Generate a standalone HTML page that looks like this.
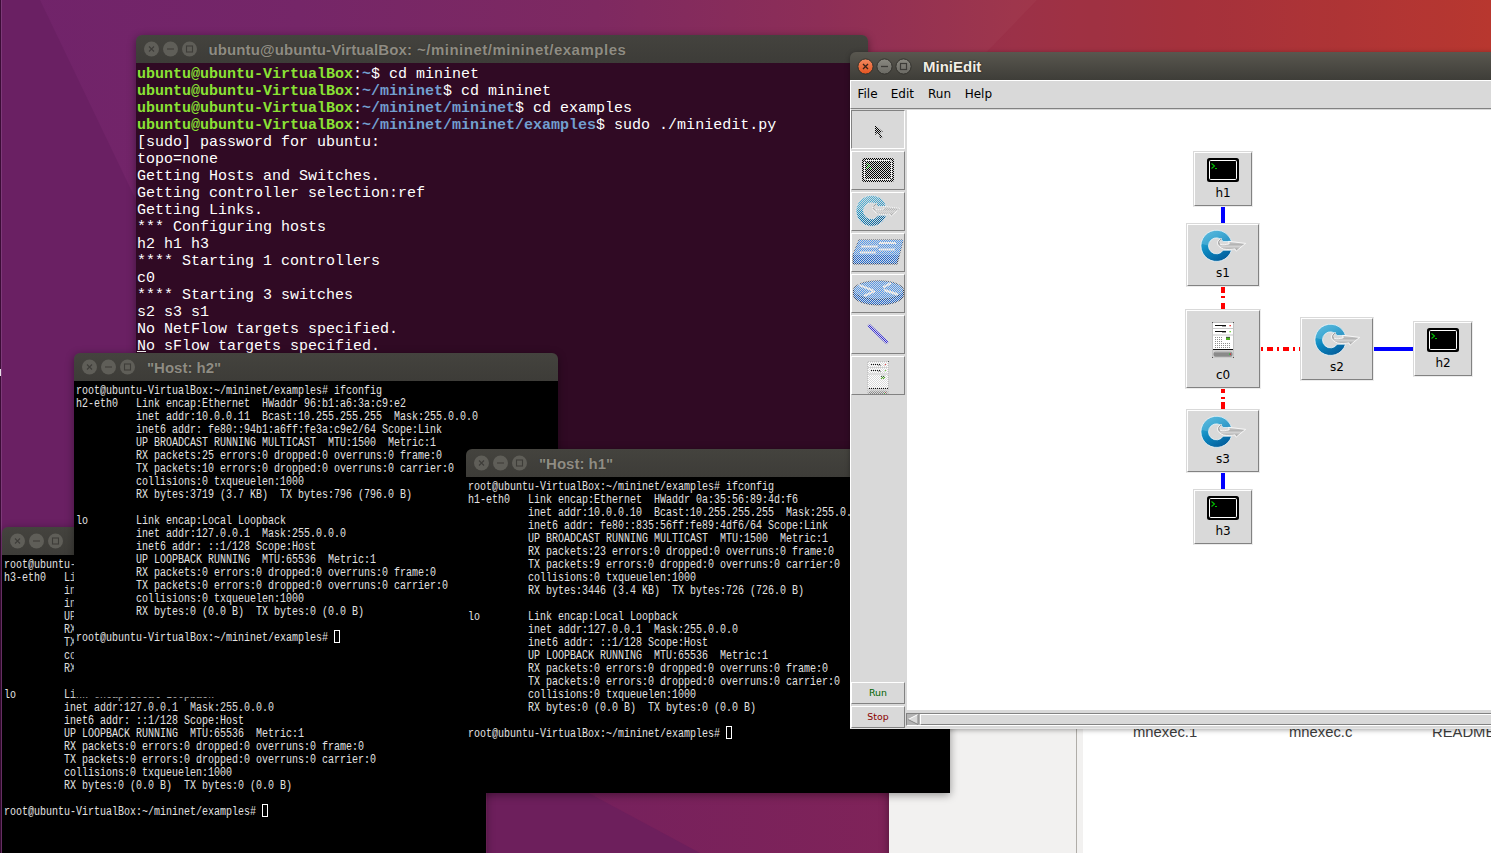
<!DOCTYPE html>
<html lang="en"><head><meta charset="utf-8"><title>MiniEdit desktop</title>
<style>
*{box-sizing:border-box}
html,body{margin:0;padding:0}
body{width:1491px;height:853px;overflow:hidden;position:relative;background:#6d2266;font-family:"Liberation Sans",sans-serif}
.a{position:absolute}
#bg{left:0;top:0;width:1491px;height:853px}
.tb{position:absolute;border-radius:6px 6px 0 0;background:linear-gradient(#44433e,#3d3c38);}
.tb.act{background:linear-gradient(#59574f,#3e3d38)}
.tb svg{position:absolute;left:0;top:0}
.tt{position:absolute;top:1px;height:27px;line-height:27px;font:bold 15px/27px "Liberation Sans",sans-serif;color:#8f8c83;white-space:pre;text-shadow:0 0 1px #2b2a27}
.act .tt{color:#f2eee5;text-shadow:0 0 1.5px #22211e,0 0 1px #22211e}
.sh{box-shadow:0 2px 9px rgba(0,0,0,.4)}
/* main terminal */
#term{left:136px;top:63px;width:732px;height:400px;background:#300a24;overflow:hidden}
#term .r{position:absolute;left:1px;height:17px;line-height:17px;font:15px/17px "Liberation Mono",monospace;color:#fff;white-space:pre}
#term b{font-weight:bold}
.g{color:#8ae234}.bl{color:#729fcf}
/* xterm */
.xt{position:absolute;background:#000;overflow:hidden}
.xt .r{position:absolute;left:2px;height:13px;font:12.5px/13px "Liberation Mono",monospace;color:#e2e2e2;white-space:pre;transform:scaleX(.79987);transform-origin:0 0}
.cur{position:absolute;width:6px;height:13px;border:1px solid #fff}
/* miniedit */
#me{left:850px;top:80px;width:641px;height:649px;background:#d9d9d9}
.dj{font-family:"DejaVu Sans","Liberation Sans",sans-serif}
.mi{position:absolute;top:1px;height:28px;line-height:27px;font:12px/27px "DejaVu Sans",sans-serif;color:#000}
.tbn{position:absolute;left:1px;width:54px;height:39px;background:#d9d9d9;border:1px solid;border-color:#fff #828282 #828282 #fff;overflow:hidden}
.st{position:absolute;background:repeating-conic-gradient(#d9d9d9 0% 25%,transparent 0% 50%) 0 0/2px 2px}
.nd{position:absolute;background:#d9d9d9;border:1px solid;border-color:#d9d9d9 #ececec #ececec #d9d9d9}
.ni{position:absolute;left:0;top:0;right:0;bottom:0;border:1px solid;border-color:#fff #828282 #828282 #fff}
.nl{position:absolute;left:0;right:0;text-align:center;font:12px/14px "DejaVu Sans",sans-serif;color:#000}
.rb{position:absolute;left:1px;width:54px;height:22px;border:1px solid;border-color:#fff #828282 #828282 #fff;font:9.4px/20px "DejaVu Sans",sans-serif;text-align:center}
</style></head>
<body>
<svg id="bg" class="a" width="1491" height="853" viewBox="0 0 1491 853">
<defs>
<linearGradient id="bgm" x1="0" y1="0" x2="1491" y2="0" gradientUnits="userSpaceOnUse">
<stop offset="0" stop-color="#70236a"/><stop offset=".2" stop-color="#752668"/><stop offset=".4" stop-color="#7e2961"/><stop offset=".55" stop-color="#8d2e57"/><stop offset=".68" stop-color="#9e364c"/><stop offset=".8" stop-color="#a9373e"/><stop offset="1" stop-color="#bf3d30"/>
</linearGradient>
</defs>
<rect width="1491" height="853" fill="url(#bgm)"/>
<polygon points="0,0 40,0 136,200 136,853 0,853" fill="#6a2063"/>
<polygon points="1037,0 1491,0 1491,60 979,60" fill="#8a1030" opacity=".13"/>
<linearGradient id="bg2" x1="487" y1="0" x2="889" y2="0" gradientUnits="userSpaceOnUse"><stop offset="0" stop-color="#73205e"/><stop offset="1" stop-color="#7f2359"/></linearGradient>
<rect x="487" y="790" width="402" height="63" fill="url(#bg2)"/>
<polygon points="487,790 583,790 700,853 487,853" fill="#6d1f5c"/>
<rect x="0" y="0" width="1" height="853" fill="#3b0c36"/>
<rect x="1" y="0" width="1" height="853" fill="#7c3a78"/>
<rect x="0" y="369" width="1" height="7" fill="#e8e0e8"/>
</svg>
<div class="a sh" style="left:889px;top:600px;width:620px;height:260px;background:#f2f1f0"></div>
<div class="a" style="left:1076px;top:600px;width:1px;height:260px;background:#b0ada8"></div>
<div class="a" style="left:1083px;top:600px;width:420px;height:260px;background:#fff"></div>
<div class="a" style="left:1133px;top:723px;font:14.8px/18px 'Liberation Sans',sans-serif;color:#3c3c3c;white-space:pre">mnexec.1</div>
<div class="a" style="left:1289px;top:723px;font:14.8px/18px 'Liberation Sans',sans-serif;color:#3c3c3c;white-space:pre">mnexec.c</div>
<div class="a" style="left:1432px;top:723px;font:14.8px/18px 'Liberation Sans',sans-serif;color:#3c3c3c;white-space:pre">README.md</div>
<div class="a sh" style="left:136px;top:35px;width:732px;height:430px;border-radius:6px 6px 0 0"></div>
<div class="tb" style="left:136px;top:35px;width:732px;height:28px"><svg width="70" height="28" viewBox="0 0 70 28"><g fill="#5f5e58"><circle cx="15.5" cy="14.0" r="7.5"/><circle cx="34.5" cy="14.0" r="7.5"/><circle cx="53.5" cy="14.0" r="7.5"/></g>
<path d="M13,11.5 l5,5 m0,-5 l-5,5" stroke="#3e3d39" stroke-width="1.1" fill="none"/><path d="M31,14.0 h7" stroke="#3e3d39" stroke-width="1.1"/><rect x="50.5" y="11.0" width="6" height="6" fill="none" stroke="#3e3d39" stroke-width="1.1"/></svg><span class="tt" style="left:72.5px;line-height:28px;letter-spacing:0.10px">ubuntu@ubuntu-VirtualBox:</span><span class="tt" style="left:281px;line-height:28px;letter-spacing:.5px">~/mininet/mininet/examples</span></div>
<div id="term" class="a">
<div class="r" style="top:3px"><b class="g">ubuntu@ubuntu-VirtualBox</b>:<b class="bl">~</b>$ cd mininet</div>
<div class="r" style="top:20px"><b class="g">ubuntu@ubuntu-VirtualBox</b>:<b class="bl">~/mininet</b>$ cd mininet</div>
<div class="r" style="top:37px"><b class="g">ubuntu@ubuntu-VirtualBox</b>:<b class="bl">~/mininet/mininet</b>$ cd examples</div>
<div class="r" style="top:54px"><b class="g">ubuntu@ubuntu-VirtualBox</b>:<b class="bl">~/mininet/mininet/examples</b>$ sudo ./miniedit.py</div>
<div class="r" style="top:71px">[sudo] password for ubuntu: </div>
<div class="r" style="top:88px">topo=none</div>
<div class="r" style="top:105px">Getting Hosts and Switches.</div>
<div class="r" style="top:122px">Getting controller selection:ref</div>
<div class="r" style="top:139px">Getting Links.</div>
<div class="r" style="top:156px">*** Configuring hosts</div>
<div class="r" style="top:173px">h2 h1 h3 </div>
<div class="r" style="top:190px">**** Starting 1 controllers</div>
<div class="r" style="top:207px">c0 </div>
<div class="r" style="top:224px">**** Starting 3 switches</div>
<div class="r" style="top:241px">s2 s3 s1 </div>
<div class="r" style="top:258px">No NetFlow targets specified.</div>
<div class="r" style="top:275px"><u>N</u>o sFlow targets specified.</div>
</div>
<div class="a sh" style="left:2px;top:527px;width:484px;height:344px;border-radius:6px 6px 0 0"></div>
<div class="tb" style="left:2px;top:527px;width:484px;height:28px"><svg width="70" height="28" viewBox="0 0 70 28"><g fill="#5f5e58"><circle cx="15.5" cy="14.0" r="7.5"/><circle cx="34.5" cy="14.0" r="7.5"/><circle cx="53.5" cy="14.0" r="7.5"/></g>
<path d="M13,11.5 l5,5 m0,-5 l-5,5" stroke="#3e3d39" stroke-width="1.1" fill="none"/><path d="M31,14.0 h7" stroke="#3e3d39" stroke-width="1.1"/><rect x="50.5" y="11.0" width="6" height="6" fill="none" stroke="#3e3d39" stroke-width="1.1"/></svg><span class="tt" style="left:73.0px;line-height:28px;letter-spacing:0.00px">"Host: h3"</span></div>
<div class="xt" style="left:2px;top:555px;width:484px;height:316px">
<div class="r" style="top:4px">root@ubuntu-VirtualBox:~/mininet/examples# ifconfig</div>
<div class="r" style="top:17px">h3-eth0   Link encap:Ethernet  HWaddr 3e:9c:52:4d:1a:7b  </div>
<div class="r" style="top:30px">          inet addr:10.0.0.12  Bcast:10.255.255.255  Mask:255.0.0.0</div>
<div class="r" style="top:43px">          inet6 addr: fe80::3c9c:52ff:fe4d:1a7b/64 Scope:Link</div>
<div class="r" style="top:56px">          UP BROADCAST RUNNING MULTICAST  MTU:1500  Metric:1</div>
<div class="r" style="top:69px">          RX packets:21 errors:0 dropped:0 overruns:0 frame:0</div>
<div class="r" style="top:82px">          TX packets:9 errors:0 dropped:0 overruns:0 carrier:0</div>
<div class="r" style="top:95px">          collisions:0 txqueuelen:1000 </div>
<div class="r" style="top:108px">          RX bytes:3290 (3.2 KB)  TX bytes:726 (726.0 B)</div>
<div class="r" style="top:134px">lo        Link encap:Local Loopback  </div>
<div class="r" style="top:147px">          inet addr:127.0.0.1  Mask:255.0.0.0</div>
<div class="r" style="top:160px">          inet6 addr: ::1/128 Scope:Host</div>
<div class="r" style="top:173px">          UP LOOPBACK RUNNING  MTU:65536  Metric:1</div>
<div class="r" style="top:186px">          RX packets:0 errors:0 dropped:0 overruns:0 frame:0</div>
<div class="r" style="top:199px">          TX packets:0 errors:0 dropped:0 overruns:0 carrier:0</div>
<div class="r" style="top:212px">          collisions:0 txqueuelen:1000 </div>
<div class="r" style="top:225px">          RX bytes:0 (0.0 B)  TX bytes:0 (0.0 B)</div>
<div class="r" style="top:251px">root@ubuntu-VirtualBox:~/mininet/examples# </div>
<i class="cur" style="left:260px;top:249px"></i>
</div>
<div class="a sh" style="left:74px;top:353px;width:484px;height:344px;border-radius:6px 6px 0 0"></div>
<div class="tb" style="left:74px;top:353px;width:484px;height:28px"><svg width="70" height="28" viewBox="0 0 70 28"><g fill="#5f5e58"><circle cx="15.5" cy="14.0" r="7.5"/><circle cx="34.5" cy="14.0" r="7.5"/><circle cx="53.5" cy="14.0" r="7.5"/></g>
<path d="M13,11.5 l5,5 m0,-5 l-5,5" stroke="#3e3d39" stroke-width="1.1" fill="none"/><path d="M31,14.0 h7" stroke="#3e3d39" stroke-width="1.1"/><rect x="50.5" y="11.0" width="6" height="6" fill="none" stroke="#3e3d39" stroke-width="1.1"/></svg><span class="tt" style="left:73.0px;line-height:28px;letter-spacing:0.00px">"Host: h2"</span></div>
<div class="xt" style="left:74px;top:381px;width:484px;height:316px">
<div class="r" style="top:4px">root@ubuntu-VirtualBox:~/mininet/examples# ifconfig</div>
<div class="r" style="top:17px">h2-eth0   Link encap:Ethernet  HWaddr 96:b1:a6:3a:c9:e2  </div>
<div class="r" style="top:30px">          inet addr:10.0.0.11  Bcast:10.255.255.255  Mask:255.0.0.0</div>
<div class="r" style="top:43px">          inet6 addr: fe80::94b1:a6ff:fe3a:c9e2/64 Scope:Link</div>
<div class="r" style="top:56px">          UP BROADCAST RUNNING MULTICAST  MTU:1500  Metric:1</div>
<div class="r" style="top:69px">          RX packets:25 errors:0 dropped:0 overruns:0 frame:0</div>
<div class="r" style="top:82px">          TX packets:10 errors:0 dropped:0 overruns:0 carrier:0</div>
<div class="r" style="top:95px">          collisions:0 txqueuelen:1000 </div>
<div class="r" style="top:108px">          RX bytes:3719 (3.7 KB)  TX bytes:796 (796.0 B)</div>
<div class="r" style="top:134px">lo        Link encap:Local Loopback  </div>
<div class="r" style="top:147px">          inet addr:127.0.0.1  Mask:255.0.0.0</div>
<div class="r" style="top:160px">          inet6 addr: ::1/128 Scope:Host</div>
<div class="r" style="top:173px">          UP LOOPBACK RUNNING  MTU:65536  Metric:1</div>
<div class="r" style="top:186px">          RX packets:0 errors:0 dropped:0 overruns:0 frame:0</div>
<div class="r" style="top:199px">          TX packets:0 errors:0 dropped:0 overruns:0 carrier:0</div>
<div class="r" style="top:212px">          collisions:0 txqueuelen:1000 </div>
<div class="r" style="top:225px">          RX bytes:0 (0.0 B)  TX bytes:0 (0.0 B)</div>
<div class="r" style="top:251px">root@ubuntu-VirtualBox:~/mininet/examples# </div>
<i class="cur" style="left:260px;top:249px"></i>
</div>
<div class="a sh" style="left:466px;top:449px;width:484px;height:344px;border-radius:6px 6px 0 0"></div>
<div class="tb" style="left:466px;top:449px;width:484px;height:28px"><svg width="70" height="28" viewBox="0 0 70 28"><g fill="#5f5e58"><circle cx="15.5" cy="14.0" r="7.5"/><circle cx="34.5" cy="14.0" r="7.5"/><circle cx="53.5" cy="14.0" r="7.5"/></g>
<path d="M13,11.5 l5,5 m0,-5 l-5,5" stroke="#3e3d39" stroke-width="1.1" fill="none"/><path d="M31,14.0 h7" stroke="#3e3d39" stroke-width="1.1"/><rect x="50.5" y="11.0" width="6" height="6" fill="none" stroke="#3e3d39" stroke-width="1.1"/></svg><span class="tt" style="left:73.0px;line-height:28px;letter-spacing:0.00px">"Host: h1"</span></div>
<div class="xt" style="left:466px;top:477px;width:484px;height:316px">
<div class="r" style="top:4px">root@ubuntu-VirtualBox:~/mininet/examples# ifconfig</div>
<div class="r" style="top:17px">h1-eth0   Link encap:Ethernet  HWaddr 0a:35:56:89:4d:f6  </div>
<div class="r" style="top:30px">          inet addr:10.0.0.10  Bcast:10.255.255.255  Mask:255.0.0.0</div>
<div class="r" style="top:43px">          inet6 addr: fe80::835:56ff:fe89:4df6/64 Scope:Link</div>
<div class="r" style="top:56px">          UP BROADCAST RUNNING MULTICAST  MTU:1500  Metric:1</div>
<div class="r" style="top:69px">          RX packets:23 errors:0 dropped:0 overruns:0 frame:0</div>
<div class="r" style="top:82px">          TX packets:9 errors:0 dropped:0 overruns:0 carrier:0</div>
<div class="r" style="top:95px">          collisions:0 txqueuelen:1000 </div>
<div class="r" style="top:108px">          RX bytes:3446 (3.4 KB)  TX bytes:726 (726.0 B)</div>
<div class="r" style="top:134px">lo        Link encap:Local Loopback  </div>
<div class="r" style="top:147px">          inet addr:127.0.0.1  Mask:255.0.0.0</div>
<div class="r" style="top:160px">          inet6 addr: ::1/128 Scope:Host</div>
<div class="r" style="top:173px">          UP LOOPBACK RUNNING  MTU:65536  Metric:1</div>
<div class="r" style="top:186px">          RX packets:0 errors:0 dropped:0 overruns:0 frame:0</div>
<div class="r" style="top:199px">          TX packets:0 errors:0 dropped:0 overruns:0 carrier:0</div>
<div class="r" style="top:212px">          collisions:0 txqueuelen:1000 </div>
<div class="r" style="top:225px">          RX bytes:0 (0.0 B)  TX bytes:0 (0.0 B)</div>
<div class="r" style="top:251px">root@ubuntu-VirtualBox:~/mininet/examples# </div>
<i class="cur" style="left:260px;top:249px"></i>
</div>
<div class="a" style="left:850px;top:52px;width:660px;height:677px;border-radius:6px 6px 0 0;box-shadow:0 1px 5px rgba(0,0,0,.35)"></div>
<div class="tb act" style="left:850px;top:52px;width:660px;height:28px"><svg width="70" height="28" viewBox="0 0 70 28"><defs><linearGradient id="cg" x1="0" y1="0" x2="0" y2="1"><stop offset="0" stop-color="#f48a60"/><stop offset="1" stop-color="#e55420"/></linearGradient><linearGradient id="gg" x1="0" y1="0" x2="0" y2="1"><stop offset="0" stop-color="#8a8981"/><stop offset="1" stop-color="#6a6963"/></linearGradient></defs>
<circle cx="15.5" cy="14.5" r="7.6" fill="url(#cg)" stroke="#33322d" stroke-width="1"/><circle cx="34.5" cy="14.5" r="7.6" fill="url(#gg)" stroke="#33322d" stroke-width="1"/><circle cx="53.5" cy="14.5" r="7.6" fill="url(#gg)" stroke="#33322d" stroke-width="1"/>
<path d="M13,12.0 l5,5 m0,-5 l-5,5" stroke="#3a2218" stroke-width="1.3" fill="none"/><path d="M31,14.5 h7" stroke="#3c3b37" stroke-width="1.3"/><rect x="50.5" y="11.5" width="6" height="6" fill="none" stroke="#3c3b37" stroke-width="1.2"/></svg><span class="tt" style="left:73.0px;line-height:28px;letter-spacing:0.00px">MiniEdit</span></div>
<div id="me" class="a">
<div class="a" style="left:0;top:0;width:641px;height:29px;border-top:1px solid #fff;border-left:1px solid #fff;border-bottom:1px solid #828282;background:#d9d9d9"></div>
<div class="a" style="left:0;top:29px;width:1px;height:620px;background:#fff"></div><div class="a" style="left:0;top:648px;width:641px;height:1px;background:#e4e4e4"></div>
<span class="mi" style="left:7.5px">File</span><span class="mi" style="left:40.7px">Edit</span><span class="mi" style="left:78.0px">Run</span><span class="mi" style="left:114.7px">Help</span>
<div class="a" style="left:57px;top:30px;width:600px;height:600px;background:#fff"></div>
<div class="a" style="left:56px;top:633px;width:600px;height:13px;background:#b3b3b3;border-top:1px solid #828282;border-left:1px solid #828282;border-bottom:1px solid #fff"></div>
<svg class="a" style="left:57px;top:634px" width="12" height="11" viewBox="0 0 12 11"><polygon points="1,5.5 11,0.5 11,10.5" fill="#d9d9d9"/><path d="M1,5.5 L11,0.5" stroke="#fff" stroke-width="1" fill="none"/><path d="M1,5.5 L11,10.5 V0.5" stroke="#828282" stroke-width="1" fill="none"/></svg>
<div class="a" style="left:70px;top:634px;width:600px;height:11px;background:#d9d9d9;border:1px solid;border-color:#fff #828282 #828282 #fff"></div>
<div class="tbn" style="top:30px;border-color:#828282 #fff #fff #828282"><svg class="a" style="left:23px;top:14px" width="9" height="14" viewBox="0 0 9 14"><path d="M0,0 L0,10 L2.6,7.8 L5.6,13.6 L7.4,12.6 L4.6,7.2 L8,7 Z" fill="#000"/></svg><i class="st" style="left:0px;top:0px;width:52px;height:37px"></i></div>
<div class="tbn" style="top:71px"><svg class="a" style="left:10px;top:6px" width="32" height="24" viewBox="0 0 32 24"><rect x="0" y="0" width="32" height="24" rx="2.5" fill="#000"/><rect x="2.5" y="2.5" width="27" height="19" rx="1.2" fill="none" stroke="#fff" stroke-width="1"/><path d="M4.5,5.5 l3,2.5 l-3,2.5" stroke="#00c000" stroke-width="1.1" fill="none"/><path d="M8,10.5 h2" stroke="#00c000" stroke-width="1.1"/></svg><i class="st" style="left:0px;top:0px;width:52px;height:37px"></i></div>
<div class="tbn" style="top:112px"><svg class="a" style="left:-1px;top:-2px" width="56" height="40" viewBox="0 0 56 40"><defs><linearGradient id="rgt" x1="10" y1="5" x2="28" y2="35" gradientUnits="userSpaceOnUse"><stop offset="0" stop-color="#3fabd6"/><stop offset=".3" stop-color="#1f99ca"/><stop offset=".5" stop-color="#0c86be"/><stop offset="1" stop-color="#035c9a"/></linearGradient><linearGradient id="agt" x1="0" y1="15" x2="0" y2="25" gradientUnits="userSpaceOnUse"><stop offset="0" stop-color="#d4d4d4"/><stop offset=".35" stop-color="#b4b4b4"/><stop offset=".55" stop-color="#d2d2d2"/><stop offset="1" stop-color="#979797"/></linearGradient><clipPath id="rct"><path d="M35.5,15.5 A15.6,15.6 0 1 0 35.5,24.2 L27.2,24.2 A8,8 0 1 1 27.2,15.5 Z"/></clipPath></defs><path d="M35.5,15.5 A15.6,15.6 0 1 0 35.5,24.2 L27.2,24.2 A8,8 0 1 1 27.2,15.5 Z" fill="url(#rgt)" stroke="#eef6fa" stroke-width=".8"/><path d="M3,16.8 C7,18.2 10,19 13.2,19.6 L20,19.6 L37,15.5 L37,3 L3,3Z" fill="#bfe6f5" opacity=".22" clip-path="url(#rct)"/><path d="M25.6,12.6 C22.6,13.4 21,15.6 21.5,17.8 C22.4,20.2 24.5,22 27.5,23 C31,23.8 35.5,23.5 39,22.9 L40,25.2 L49.6,17.4 L32.6,15.3 L33.2,17.9 C30,18.6 26.5,19.2 24.4,18.4 C22.8,17.4 23.4,14.4 25.6,12.6Z" fill="url(#agt)" stroke="#fafafa" stroke-width=".9"/><path d="M25.4,13 C23,14 22.2,16.5 23.4,18.2" stroke="#8d8d8d" stroke-width=".9" fill="none"/></svg><i class="st" style="left:0px;top:0px;width:52px;height:37px"></i></div>
<div class="tbn" style="top:153px"><svg class="a" style="left:0px;top:5px" width="52" height="26" viewBox="0 0 52 26"><polygon points="7,1 51,1 45,25 1,25 1,16" fill="#1e6ad6" stroke="#0a1020" stroke-width=".7"/><polygon points="7,1 51,1 47.2,16 1,16" fill="#4f97ee"/><path d="M9,7.5 h17 M27,4 h17 M27,10.5 h16 M8,13.5 h16" stroke="#eef2f8" stroke-width="2.2"/></svg><i class="st" style="left:0px;top:0px;width:52px;height:37px"></i></div>
<div class="tbn" style="top:194px"><svg class="a" style="left:1px;top:5px" width="51" height="26" viewBox="0 0 51 26"><path d="M0.5,10 V15 A25,10 0 0 0 50.5,15 V10Z" fill="#1e6ad6" stroke="#0a1020" stroke-width=".6"/><ellipse cx="25.5" cy="10" rx="25" ry="9.3" fill="#4f97ee" stroke="#0a1020" stroke-width=".5"/><path d="M6,5 l14,5.5 M31,10 l14,4.5 M11,16 l11,-5 M30,7.5 l8,-4.5" stroke="#eef2f8" stroke-width="2.4"/></svg><i class="st" style="left:0px;top:0px;width:52px;height:37px"></i></div>
<div class="tbn" style="top:235px"><svg class="a" style="left:15px;top:7px" width="22" height="22" viewBox="0 0 22 22"><path d="M1.5,1.8 L20.5,20.2" stroke="#2a20e0" stroke-width="3"/></svg><i class="st" style="left:0px;top:0px;width:52px;height:37px"></i></div>
<div class="tbn" style="top:276px"><svg class="a" style="left:15px;top:4px" width="22" height="36" viewBox="0 0 22 36"><rect x=".5" y=".5" width="21" height="35" fill="#f6f6f6" stroke="#c2c2c2"/><rect x="1" y="1" width="20" height="5" fill="#fff"/><rect x="1" y="7" width="20" height="5.5" fill="#fff"/><rect x="1" y="13.5" width="20" height="13.5" fill="#fff"/><path d="M.5,6.5 h21 M.5,13 h21" stroke="#c9c9c9"/><path d="M3,3.5 h11 M3,9.5 h11" stroke="#111" stroke-width="1.2"/><path d="M10,4.5 h4 M10,10.5 h4" stroke="#888" stroke-width=".8"/><rect x="17.5" y="3" width="1.3" height="1.3" fill="#e01010"/><rect x="17.5" y="9" width="1.3" height="1.3" fill="#50c818"/><rect x="14" y="15" width="4" height="3" fill="#4cb020"/><path d="M14,15.3 h4" stroke="#334" stroke-width=".8"/><g fill="#8e8e8e"><rect x="3.0" y="15.0" width="1" height="1"/><rect x="5.0" y="15.0" width="1" height="1"/><rect x="7.0" y="15.0" width="1" height="1"/><rect x="9.0" y="15.0" width="1" height="1"/><rect x="3.0" y="17.0" width="1" height="1"/><rect x="5.0" y="17.0" width="1" height="1"/><rect x="7.0" y="17.0" width="1" height="1"/><rect x="9.0" y="17.0" width="1" height="1"/><rect x="3.0" y="19.0" width="1" height="1"/><rect x="5.0" y="19.0" width="1" height="1"/><rect x="7.0" y="19.0" width="1" height="1"/><rect x="9.0" y="19.0" width="1" height="1"/><rect x="3.0" y="21.0" width="1" height="1"/><rect x="5.0" y="21.0" width="1" height="1"/><rect x="7.0" y="21.0" width="1" height="1"/><rect x="9.0" y="21.0" width="1" height="1"/><rect x="11.0" y="21.0" width="1" height="1"/><rect x="13.0" y="21.0" width="1" height="1"/><rect x="15.0" y="21.0" width="1" height="1"/><rect x="17.0" y="21.0" width="1" height="1"/><rect x="3.0" y="23.0" width="1" height="1"/><rect x="5.0" y="23.0" width="1" height="1"/><rect x="7.0" y="23.0" width="1" height="1"/><rect x="9.0" y="23.0" width="1" height="1"/><rect x="11.0" y="23.0" width="1" height="1"/><rect x="13.0" y="23.0" width="1" height="1"/><rect x="15.0" y="23.0" width="1" height="1"/><rect x="17.0" y="23.0" width="1" height="1"/><rect x="3.0" y="25.0" width="1" height="1"/><rect x="5.0" y="25.0" width="1" height="1"/><rect x="7.0" y="25.0" width="1" height="1"/><rect x="9.0" y="25.0" width="1" height="1"/><rect x="11.0" y="25.0" width="1" height="1"/><rect x="13.0" y="25.0" width="1" height="1"/><rect x="15.0" y="25.0" width="1" height="1"/><rect x="17.0" y="25.0" width="1" height="1"/></g><rect x="1" y="27" width="20" height="1.2" fill="#111"/><rect x="1" y="28.2" width="20" height="7.3" fill="#d2d2d2"/><rect x="1.5" y="29.8" width="19" height="5" rx="2" fill="#8a8a8a"/><path d="M2.5,30.4 h17" stroke="#a8a8a8" stroke-width=".8"/><rect x="17" y="31.5" width="1" height="1.2" fill="#30c030"/><rect x="18" y="31.5" width="1" height="1.2" fill="#e02020"/><g fill="#555"><rect x="0" y="0" width="1" height="1"/><rect x="21" y="0" width="1" height="1"/><rect x="0" y="35" width="1" height="1"/><rect x="21" y="35" width="1" height="1"/></g></svg><i class="st" style="left:0px;top:0px;width:52px;height:37px"></i></div>
<div class="rb" style="top:602px;color:#006400">Run</div><div class="rb" style="top:626px;color:#8b0000">Stop</div>
<div class="a" style="left:371px;top:127px;width:4px;height:16px;background:#0000ff"></div><div class="a" style="left:371px;top:393px;width:4px;height:16px;background:#0000ff"></div><div class="a" style="left:524px;top:267px;width:39px;height:4px;background:#0000ff"></div><div class="a" style="left:371px;top:207px;width:4px;height:6px;background:#ff0000"></div><div class="a" style="left:371px;top:216px;width:4px;height:2px;background:#ff0000"></div><div class="a" style="left:371px;top:223px;width:4px;height:6px;background:#ff0000"></div><div class="a" style="left:371px;top:309px;width:4px;height:4px;background:#ff0000"></div><div class="a" style="left:371px;top:317px;width:4px;height:2px;background:#ff0000"></div><div class="a" style="left:371px;top:322px;width:4px;height:7px;background:#ff0000"></div><div class="a" style="left:411px;top:267px;width:2px;height:4px;background:#ff0000"></div><div class="a" style="left:417px;top:267px;width:6px;height:4px;background:#ff0000"></div><div class="a" style="left:427px;top:267px;width:2px;height:4px;background:#ff0000"></div><div class="a" style="left:433px;top:267px;width:6px;height:4px;background:#ff0000"></div><div class="a" style="left:443px;top:267px;width:2px;height:4px;background:#ff0000"></div><div class="a" style="left:449px;top:267px;width:1px;height:4px;background:#ff0000"></div>
<div class="nd" style="left:343px;top:71px;width:60px;height:56px"><div class="ni"><svg class="a" style="left:12px;top:5px" width="32" height="24" viewBox="0 0 32 24"><rect x="0" y="0" width="32" height="24" rx="2.5" fill="#000"/><rect x="2.5" y="2.5" width="27" height="19" rx="1.2" fill="none" stroke="#fff" stroke-width="1"/><path d="M4.5,5.5 l3,2.5 l-3,2.5" stroke="#00c000" stroke-width="1.1" fill="none"/><path d="M8,10.5 h2" stroke="#00c000" stroke-width="1.1"/></svg><span class="nl" style="top:33px">h1</span></div></div>
<div class="nd" style="left:563px;top:241px;width:60px;height:56px"><div class="ni"><svg class="a" style="left:12px;top:5px" width="32" height="24" viewBox="0 0 32 24"><rect x="0" y="0" width="32" height="24" rx="2.5" fill="#000"/><rect x="2.5" y="2.5" width="27" height="19" rx="1.2" fill="none" stroke="#fff" stroke-width="1"/><path d="M4.5,5.5 l3,2.5 l-3,2.5" stroke="#00c000" stroke-width="1.1" fill="none"/><path d="M8,10.5 h2" stroke="#00c000" stroke-width="1.1"/></svg><span class="nl" style="top:33px">h2</span></div></div>
<div class="nd" style="left:343px;top:409px;width:60px;height:56px"><div class="ni"><svg class="a" style="left:12px;top:5px" width="32" height="24" viewBox="0 0 32 24"><rect x="0" y="0" width="32" height="24" rx="2.5" fill="#000"/><rect x="2.5" y="2.5" width="27" height="19" rx="1.2" fill="none" stroke="#fff" stroke-width="1"/><path d="M4.5,5.5 l3,2.5 l-3,2.5" stroke="#00c000" stroke-width="1.1" fill="none"/><path d="M8,10.5 h2" stroke="#00c000" stroke-width="1.1"/></svg><span class="nl" style="top:33px">h3</span></div></div>
<div class="nd" style="left:336px;top:143px;width:74px;height:64px"><div class="ni"><svg class="a" style="left:8px;top:1px" width="56" height="40" viewBox="0 0 56 40"><defs><linearGradient id="rg1" x1="10" y1="5" x2="28" y2="35" gradientUnits="userSpaceOnUse"><stop offset="0" stop-color="#3fabd6"/><stop offset=".3" stop-color="#1f99ca"/><stop offset=".5" stop-color="#0c86be"/><stop offset="1" stop-color="#035c9a"/></linearGradient><linearGradient id="ag1" x1="0" y1="15" x2="0" y2="25" gradientUnits="userSpaceOnUse"><stop offset="0" stop-color="#d4d4d4"/><stop offset=".35" stop-color="#b4b4b4"/><stop offset=".55" stop-color="#d2d2d2"/><stop offset="1" stop-color="#979797"/></linearGradient><clipPath id="rc1"><path d="M35.5,15.5 A15.6,15.6 0 1 0 35.5,24.2 L27.2,24.2 A8,8 0 1 1 27.2,15.5 Z"/></clipPath></defs><path d="M35.5,15.5 A15.6,15.6 0 1 0 35.5,24.2 L27.2,24.2 A8,8 0 1 1 27.2,15.5 Z" fill="url(#rg1)" stroke="#eef6fa" stroke-width=".8"/><path d="M3,16.8 C7,18.2 10,19 13.2,19.6 L20,19.6 L37,15.5 L37,3 L3,3Z" fill="#bfe6f5" opacity=".22" clip-path="url(#rc1)"/><path d="M25.6,12.6 C22.6,13.4 21,15.6 21.5,17.8 C22.4,20.2 24.5,22 27.5,23 C31,23.8 35.5,23.5 39,22.9 L40,25.2 L49.6,17.4 L32.6,15.3 L33.2,17.9 C30,18.6 26.5,19.2 24.4,18.4 C22.8,17.4 23.4,14.4 25.6,12.6Z" fill="url(#ag1)" stroke="#fafafa" stroke-width=".9"/><path d="M25.4,13 C23,14 22.2,16.5 23.4,18.2" stroke="#8d8d8d" stroke-width=".9" fill="none"/></svg><span class="nl" style="top:41px">s1</span></div></div>
<div class="nd" style="left:450px;top:237px;width:74px;height:64px"><div class="ni"><svg class="a" style="left:8px;top:1px" width="56" height="40" viewBox="0 0 56 40"><defs><linearGradient id="rg2" x1="10" y1="5" x2="28" y2="35" gradientUnits="userSpaceOnUse"><stop offset="0" stop-color="#3fabd6"/><stop offset=".3" stop-color="#1f99ca"/><stop offset=".5" stop-color="#0c86be"/><stop offset="1" stop-color="#035c9a"/></linearGradient><linearGradient id="ag2" x1="0" y1="15" x2="0" y2="25" gradientUnits="userSpaceOnUse"><stop offset="0" stop-color="#d4d4d4"/><stop offset=".35" stop-color="#b4b4b4"/><stop offset=".55" stop-color="#d2d2d2"/><stop offset="1" stop-color="#979797"/></linearGradient><clipPath id="rc2"><path d="M35.5,15.5 A15.6,15.6 0 1 0 35.5,24.2 L27.2,24.2 A8,8 0 1 1 27.2,15.5 Z"/></clipPath></defs><path d="M35.5,15.5 A15.6,15.6 0 1 0 35.5,24.2 L27.2,24.2 A8,8 0 1 1 27.2,15.5 Z" fill="url(#rg2)" stroke="#eef6fa" stroke-width=".8"/><path d="M3,16.8 C7,18.2 10,19 13.2,19.6 L20,19.6 L37,15.5 L37,3 L3,3Z" fill="#bfe6f5" opacity=".22" clip-path="url(#rc2)"/><path d="M25.6,12.6 C22.6,13.4 21,15.6 21.5,17.8 C22.4,20.2 24.5,22 27.5,23 C31,23.8 35.5,23.5 39,22.9 L40,25.2 L49.6,17.4 L32.6,15.3 L33.2,17.9 C30,18.6 26.5,19.2 24.4,18.4 C22.8,17.4 23.4,14.4 25.6,12.6Z" fill="url(#ag2)" stroke="#fafafa" stroke-width=".9"/><path d="M25.4,13 C23,14 22.2,16.5 23.4,18.2" stroke="#8d8d8d" stroke-width=".9" fill="none"/></svg><span class="nl" style="top:41px">s2</span></div></div>
<div class="nd" style="left:336px;top:329px;width:74px;height:64px"><div class="ni"><svg class="a" style="left:8px;top:1px" width="56" height="40" viewBox="0 0 56 40"><defs><linearGradient id="rg3" x1="10" y1="5" x2="28" y2="35" gradientUnits="userSpaceOnUse"><stop offset="0" stop-color="#3fabd6"/><stop offset=".3" stop-color="#1f99ca"/><stop offset=".5" stop-color="#0c86be"/><stop offset="1" stop-color="#035c9a"/></linearGradient><linearGradient id="ag3" x1="0" y1="15" x2="0" y2="25" gradientUnits="userSpaceOnUse"><stop offset="0" stop-color="#d4d4d4"/><stop offset=".35" stop-color="#b4b4b4"/><stop offset=".55" stop-color="#d2d2d2"/><stop offset="1" stop-color="#979797"/></linearGradient><clipPath id="rc3"><path d="M35.5,15.5 A15.6,15.6 0 1 0 35.5,24.2 L27.2,24.2 A8,8 0 1 1 27.2,15.5 Z"/></clipPath></defs><path d="M35.5,15.5 A15.6,15.6 0 1 0 35.5,24.2 L27.2,24.2 A8,8 0 1 1 27.2,15.5 Z" fill="url(#rg3)" stroke="#eef6fa" stroke-width=".8"/><path d="M3,16.8 C7,18.2 10,19 13.2,19.6 L20,19.6 L37,15.5 L37,3 L3,3Z" fill="#bfe6f5" opacity=".22" clip-path="url(#rc3)"/><path d="M25.6,12.6 C22.6,13.4 21,15.6 21.5,17.8 C22.4,20.2 24.5,22 27.5,23 C31,23.8 35.5,23.5 39,22.9 L40,25.2 L49.6,17.4 L32.6,15.3 L33.2,17.9 C30,18.6 26.5,19.2 24.4,18.4 C22.8,17.4 23.4,14.4 25.6,12.6Z" fill="url(#ag3)" stroke="#fafafa" stroke-width=".9"/><path d="M25.4,13 C23,14 22.2,16.5 23.4,18.2" stroke="#8d8d8d" stroke-width=".9" fill="none"/></svg><span class="nl" style="top:41px">s3</span></div></div>
<div class="nd" style="left:335px;top:229px;width:76px;height:80px"><div class="ni"><svg class="a" style="left:25px;top:11px" width="22" height="36" viewBox="0 0 22 36"><rect x=".5" y=".5" width="21" height="35" fill="#f6f6f6" stroke="#c2c2c2"/><rect x="1" y="1" width="20" height="5" fill="#fff"/><rect x="1" y="7" width="20" height="5.5" fill="#fff"/><rect x="1" y="13.5" width="20" height="13.5" fill="#fff"/><path d="M.5,6.5 h21 M.5,13 h21" stroke="#c9c9c9"/><path d="M3,3.5 h11 M3,9.5 h11" stroke="#111" stroke-width="1.2"/><path d="M10,4.5 h4 M10,10.5 h4" stroke="#888" stroke-width=".8"/><rect x="17.5" y="3" width="1.3" height="1.3" fill="#e01010"/><rect x="17.5" y="9" width="1.3" height="1.3" fill="#50c818"/><rect x="14" y="15" width="4" height="3" fill="#4cb020"/><path d="M14,15.3 h4" stroke="#334" stroke-width=".8"/><g fill="#8e8e8e"><rect x="3.0" y="15.0" width="1" height="1"/><rect x="5.0" y="15.0" width="1" height="1"/><rect x="7.0" y="15.0" width="1" height="1"/><rect x="9.0" y="15.0" width="1" height="1"/><rect x="3.0" y="17.0" width="1" height="1"/><rect x="5.0" y="17.0" width="1" height="1"/><rect x="7.0" y="17.0" width="1" height="1"/><rect x="9.0" y="17.0" width="1" height="1"/><rect x="3.0" y="19.0" width="1" height="1"/><rect x="5.0" y="19.0" width="1" height="1"/><rect x="7.0" y="19.0" width="1" height="1"/><rect x="9.0" y="19.0" width="1" height="1"/><rect x="3.0" y="21.0" width="1" height="1"/><rect x="5.0" y="21.0" width="1" height="1"/><rect x="7.0" y="21.0" width="1" height="1"/><rect x="9.0" y="21.0" width="1" height="1"/><rect x="11.0" y="21.0" width="1" height="1"/><rect x="13.0" y="21.0" width="1" height="1"/><rect x="15.0" y="21.0" width="1" height="1"/><rect x="17.0" y="21.0" width="1" height="1"/><rect x="3.0" y="23.0" width="1" height="1"/><rect x="5.0" y="23.0" width="1" height="1"/><rect x="7.0" y="23.0" width="1" height="1"/><rect x="9.0" y="23.0" width="1" height="1"/><rect x="11.0" y="23.0" width="1" height="1"/><rect x="13.0" y="23.0" width="1" height="1"/><rect x="15.0" y="23.0" width="1" height="1"/><rect x="17.0" y="23.0" width="1" height="1"/><rect x="3.0" y="25.0" width="1" height="1"/><rect x="5.0" y="25.0" width="1" height="1"/><rect x="7.0" y="25.0" width="1" height="1"/><rect x="9.0" y="25.0" width="1" height="1"/><rect x="11.0" y="25.0" width="1" height="1"/><rect x="13.0" y="25.0" width="1" height="1"/><rect x="15.0" y="25.0" width="1" height="1"/><rect x="17.0" y="25.0" width="1" height="1"/></g><rect x="1" y="27" width="20" height="1.2" fill="#111"/><rect x="1" y="28.2" width="20" height="7.3" fill="#d2d2d2"/><rect x="1.5" y="29.8" width="19" height="5" rx="2" fill="#8a8a8a"/><path d="M2.5,30.4 h17" stroke="#a8a8a8" stroke-width=".8"/><rect x="17" y="31.5" width="1" height="1.2" fill="#30c030"/><rect x="18" y="31.5" width="1" height="1.2" fill="#e02020"/><g fill="#555"><rect x="0" y="0" width="1" height="1"/><rect x="21" y="0" width="1" height="1"/><rect x="0" y="35" width="1" height="1"/><rect x="21" y="35" width="1" height="1"/></g></svg><span class="nl" style="top:57px">c0</span></div></div>
</div>
</body></html>
